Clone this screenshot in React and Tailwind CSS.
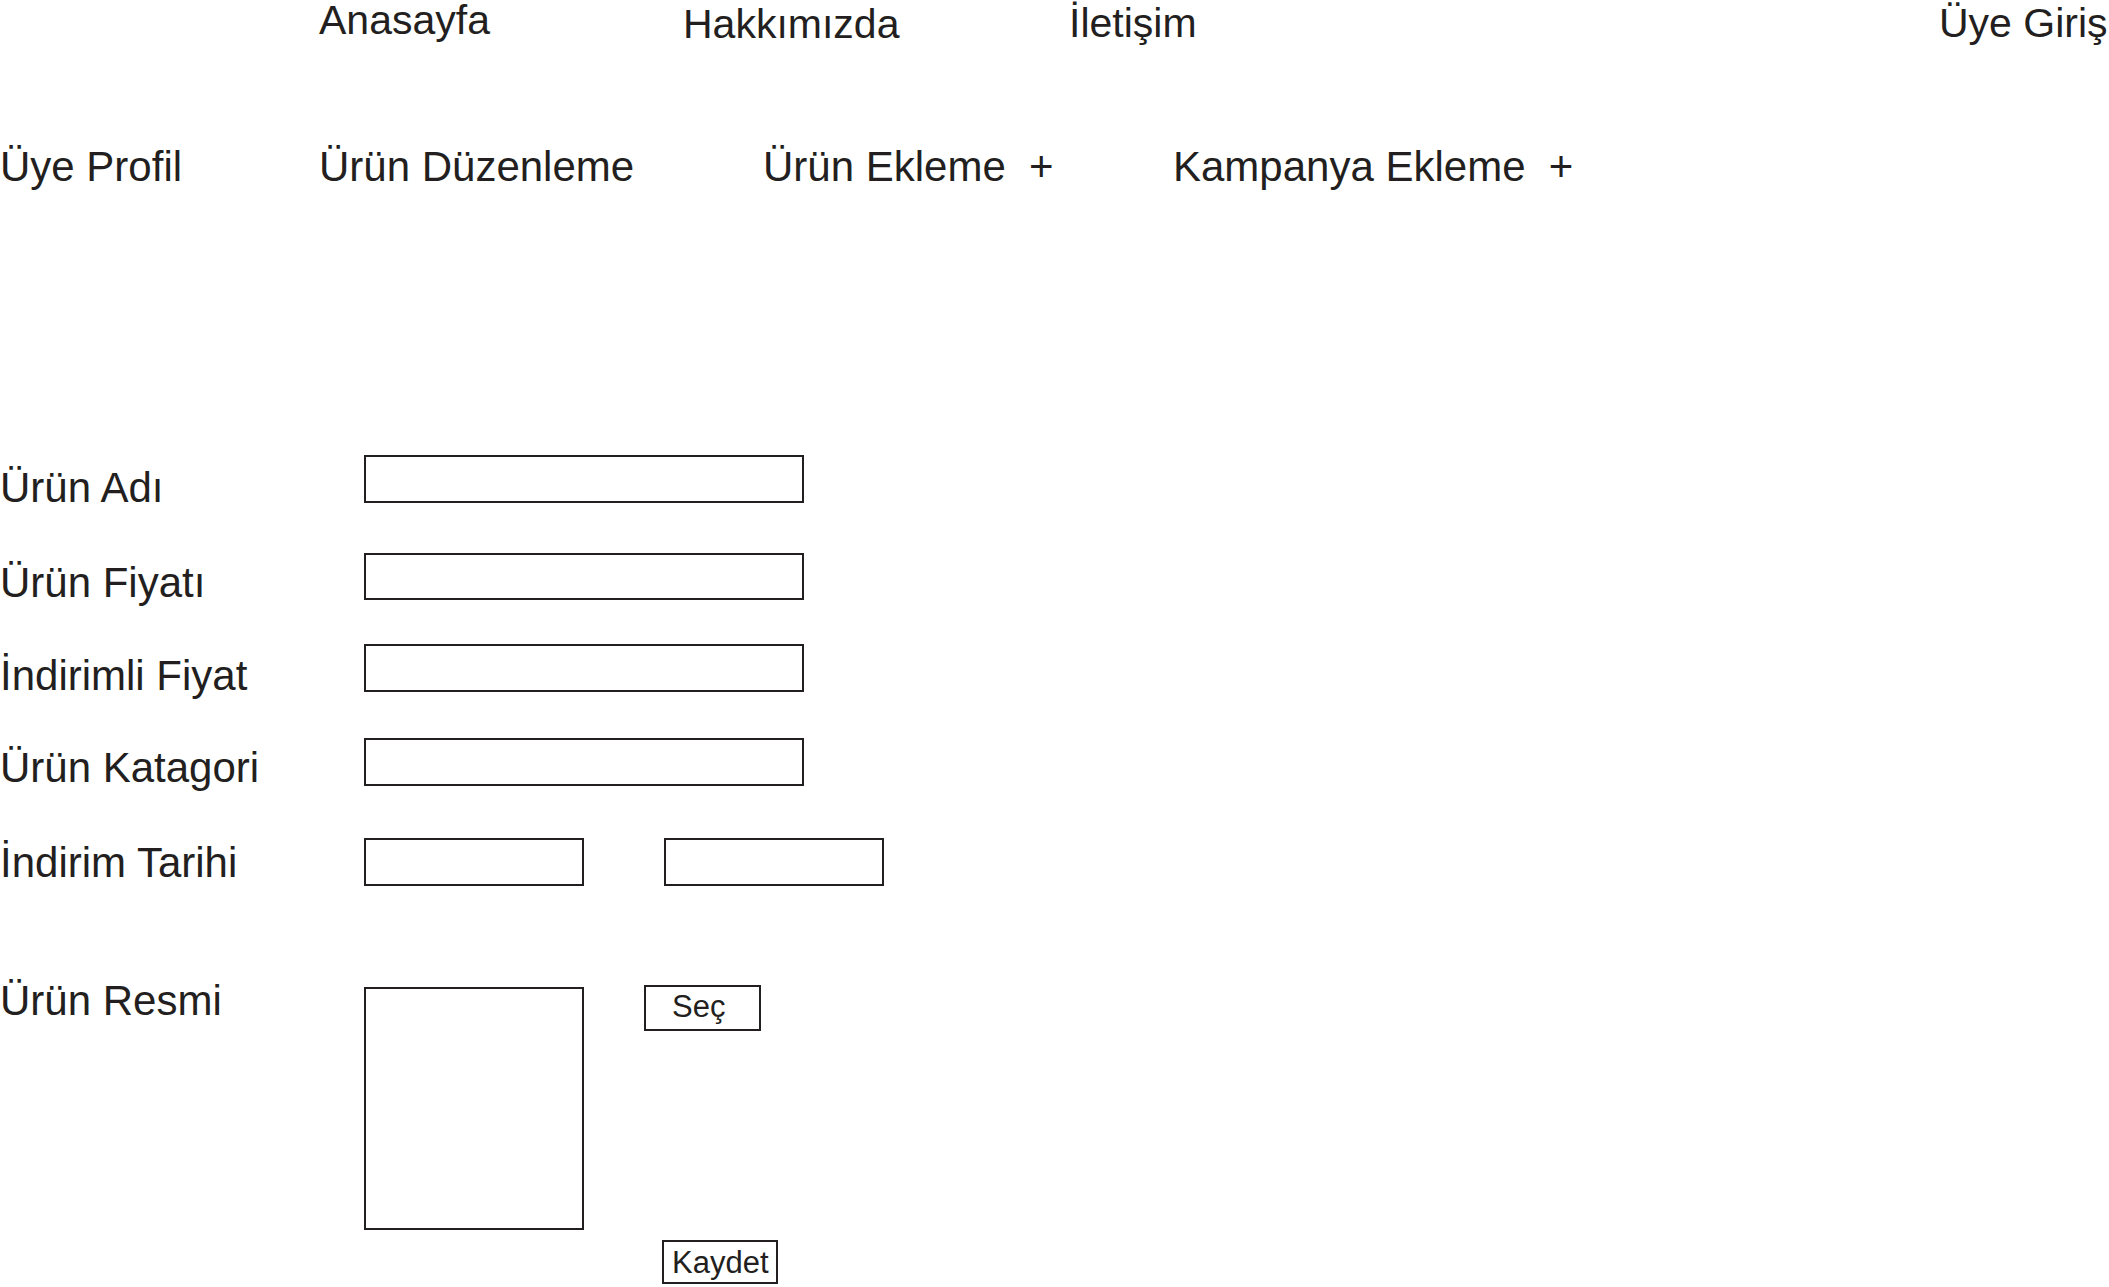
export default function App() {
  const font = { fontFamily: '"Liberation Sans", Arial, Helvetica, sans-serif' };
  const box = "border-2 border-[#231f20] bg-white";
  return (
    <div
      className="w-[2109px] h-[1287px] overflow-hidden bg-white text-[#231f20] text-[42px] leading-none font-['Liberation_Sans',Arial,sans-serif]"
      style={font}
    >
      {/* top nav */}
      <div className="flex items-start h-[145px] pl-[319px] whitespace-nowrap text-[41px]">
        <div className="w-[364px]">Anasayfa</div>
        <div className="w-[386px] mt-[4px]">Hakkımızda</div>
        <div className="w-[870px] mt-[3px]">İletişim</div>
        <div className="mt-[3px]">Üye Giriş</div>
      </div>

      {/* sub nav */}
      <div className="flex items-start h-[41px] pt-[1px] whitespace-pre">
        <div className="w-[319px]">Üye Profil</div>
        <div className="w-[444px]">Ürün Düzenleme</div>
        <div className="w-[410px]">Ürün Ekleme  +</div>
        <div>Kampanya Ekleme  +</div>
      </div>

      {/* form */}
      <div className="flex flex-col">
        <div className="flex items-start h-[48px] mt-[269px]">
          <div className="w-[364px] mt-[12px] whitespace-nowrap">Ürün Adı</div>
          <div className={`w-[440px] h-[48px] ${box}`} />
        </div>
        <div className="flex items-start h-[47px] mt-[50px]">
          <div className="w-[364px] mt-[9px] whitespace-nowrap">Ürün Fiyatı</div>
          <div className={`w-[440px] h-[47px] ${box}`} />
        </div>
        <div className="flex items-start h-[48px] mt-[44px]">
          <div className="w-[364px] mt-[11px] whitespace-nowrap">İndirimli Fiyat</div>
          <div className={`w-[440px] h-[48px] ${box}`} />
        </div>
        <div className="flex items-start h-[48px] mt-[46px]">
          <div className="w-[364px] mt-[9px] whitespace-nowrap">Ürün Katagori</div>
          <div className={`w-[440px] h-[48px] ${box}`} />
        </div>
        <div className="flex items-start h-[48px] mt-[52px]">
          <div className="w-[364px] mt-[4px] whitespace-nowrap">İndirim Tarihi</div>
          <div className={`w-[220px] h-[48px] ${box}`} />
          <div className={`w-[220px] h-[48px] ml-[80px] ${box}`} />
        </div>

        <div className="flex items-start mt-[101px]">
          <div className="w-[364px] -mt-[7px] whitespace-nowrap">Ürün Resmi</div>
          <div className={`w-[220px] h-[243px] ${box}`} />
          <div
            className={`ml-[60px] -mt-[2px] w-[117px] h-[46px] pl-[26px] pt-[4px] text-[31px] leading-none ${box}`}
          >
            Seç
          </div>
        </div>

        <div className="flex mt-[10px] ml-[662px]">
          <div
            className={`w-[116px] h-[44px] pl-[8px] pt-[5px] text-[31px] leading-none whitespace-nowrap ${box}`}
          >
            Kaydet
          </div>
        </div>
      </div>
    </div>
  );
}
